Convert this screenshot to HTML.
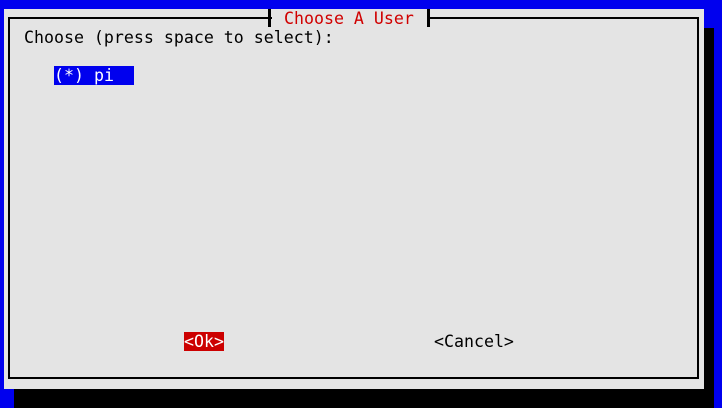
<!DOCTYPE html><html><head><style>
body{margin:0;width:722px;height:408px;background:#0000ee;position:relative;overflow:hidden;font-family:"DejaVu Sans Mono","Liberation Mono",monospace;font-size:16.6px;}
div{position:absolute}
.t{line-height:19px;white-space:pre;color:#000}
</style></head><body>
<div style="left:14px;top:28px;width:700px;height:380px;background:#000"></div>
<div style="left:4px;top:9px;width:700px;height:380px;background:#e4e4e4"></div>
<div style="left:8px;top:17px;width:687px;height:358px;border:2.5px solid #000"></div>
<div style="left:272px;top:9px;width:155px;height:19px;background:#e4e4e4"></div>
<div style="left:268px;top:9px;width:2.5px;height:18px;background:#000"></div>
<div style="left:427px;top:9px;width:2.5px;height:18px;background:#000"></div>
<div class="t" style="left:284px;top:9px;color:#d00000">Choose A User</div>
<div class="t" style="left:24px;top:28px">Choose (press space to select):</div>
<div class="t" style="left:54px;top:66px;width:80px;background:#0000ee;color:#fff">(*) pi</div>
<div class="t" style="left:184px;top:332px;width:40px;background:#cc0000;color:#fff">&lt;Ok&gt;</div>
<div class="t" style="left:434px;top:332px">&lt;Cancel&gt;</div>
</body></html>
